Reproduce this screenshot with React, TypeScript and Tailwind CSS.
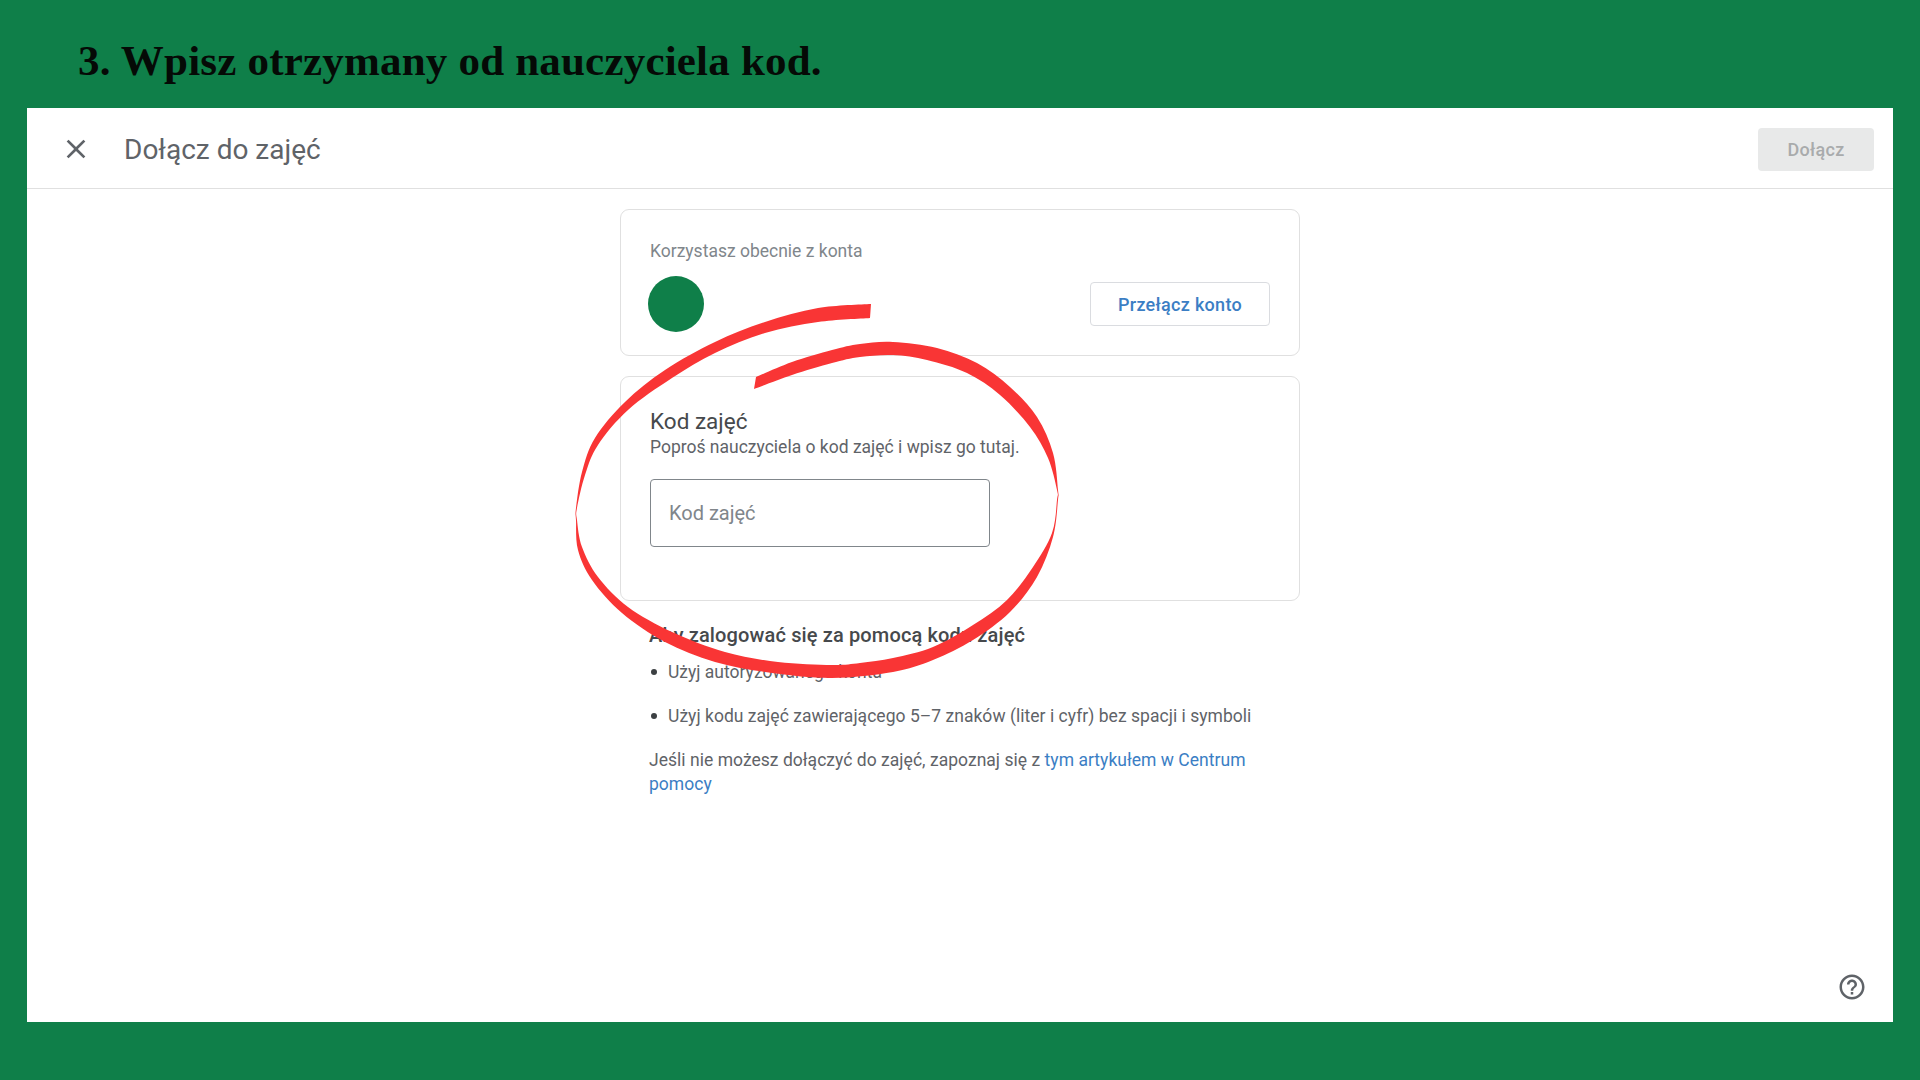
const outer: [number, number][] = [
  [871, 304], [818, 308], [765, 322], [715, 342], [665, 370], [625, 402], [595, 438], [582, 472], [576, 508], [576, 520], [578, 550],
  [592, 580], [622, 613], [665, 642], [715, 662], [772, 673], [832, 678], [893, 672], [933, 660], [973, 640], [1010, 612], [1037, 577],
  [1053, 537], [1058, 500], [1058, 490], [1053, 453], [1037, 417], [1010, 387], [977, 363], [937, 348], [893, 342], [860, 344], [832, 350],
  [792, 362], [756, 377],
];
const inner: [number, number][] = [
  [754, 389], [792, 375], [832, 363], [860, 357], [893, 355], [927, 360], [967, 373], [1000, 395], [1030, 427], [1048, 458], [1057, 490],
  [1057, 500], [1052, 533], [1033, 567], [1007, 600], [973, 625], [933, 647], [893, 658], [860, 663], [832, 665], [778, 662], [725, 652],
  [672, 632], [628, 607], [598, 577], [582, 547], [577, 520], [577, 508], [585, 475], [598, 445], [628, 410], [672, 378], [715, 353],
  [765, 333], [818, 322], [870, 318],
];

function smooth(points: [number, number][], first: boolean) {
  let d = first ? `M${points[0][0]} ${points[0][1]}` : `L${points[0][0]} ${points[0][1]}`;
  for (let i = 0; i < points.length - 1; i++) {
    const p0 = points[Math.max(i - 1, 0)];
    const p1 = points[i];
    const p2 = points[i + 1];
    const p3 = points[Math.min(i + 2, points.length - 1)];
    const c1x = p1[0] + (p2[0] - p0[0]) / 6;
    const c1y = p1[1] + (p2[1] - p0[1]) / 6;
    const c2x = p2[0] - (p3[0] - p1[0]) / 6;
    const c2y = p2[1] - (p3[1] - p1[1]) / 6;
    d += ` C${c1x} ${c1y} ${c2x} ${c2y} ${p2[0]} ${p2[1]}`;
  }
  return d;
}

const stroke = smooth(outer, true) + " " + smooth(inner, false) + " Z";

export default function App() {
  return (
    <div className="relative flex h-[1080px] w-[1920px] flex-col overflow-hidden bg-[#0f7f49] font-['Roboto',sans-serif]">
      <div className="flex h-[108px] shrink-0 items-start pl-[78px] pt-[33px]">
        <h1 className="font-['Liberation_Serif',serif] text-[43px] font-bold leading-[56px] tracking-[0.2px] text-[#050a06]">
          3. Wpisz otrzymany od nauczyciela kod.
        </h1>
      </div>

      <main className="mx-[27px] flex h-[914px] shrink-0 flex-col bg-white">
        <header className="flex h-[81px] shrink-0 items-center border-b border-[#e0e0e0] pr-[19px]">
          <svg className="ml-[33px] mt-[1px] h-[32px] w-[32px] text-[#5f6368]" viewBox="0 0 24 24" fill="currentColor">
            <path d="M19 6.41L17.59 5 12 10.59 6.41 5 5 6.41 10.59 12 5 17.59 6.41 19 12 13.41 17.59 19 19 17.59 13.41 12z" />
          </svg>
          <div className="ml-[32px] mt-[3px] text-[28px] text-[#5f6368]">Dołącz do zajęć</div>
          <button className="ml-auto mt-[2px] h-[43px] w-[116px] rounded-[4px] bg-[#e8e9e9] text-[18px] font-medium tracking-[0.3px] text-[#a9abac]">
            Dołącz
          </button>
        </header>

        <div className="flex flex-1 flex-col items-center pt-[20px]">
          <div className="w-[680px]">
            <section className="h-[147px] rounded-[9px] border border-[#e0e0e0] px-[29px] pt-[30px]">
              <div className="text-[17.5px] leading-[22px] text-[#80868b]">Korzystasz obecnie z konta</div>
              <div className="mt-[14px] flex items-center justify-between">
                <div className="-ml-[2px] h-[56px] w-[56px] rounded-full bg-[#0f7f49]" />
                <button className="h-[44px] w-[180px] rounded-[4px] border border-[#dadce0] text-[18px] font-medium tracking-[0.3px] text-[#3b7ec4]">
                  Przełącz konto
                </button>
              </div>
            </section>

            <section className="mt-[20px] h-[225px] rounded-[9px] border border-[#e0e0e0] px-[29px] pt-[29px]">
              <div className="text-[22.5px] leading-[30px] text-[#46494c]">Kod zajęć</div>
              <div className="text-[17.5px] leading-[22px] text-[#5f6368]">Poproś nauczyciela o kod zajęć i wpisz go tutaj.</div>
              <div className="mt-[21px] flex h-[68px] w-[340px] items-center rounded-[4px] border border-[#80868b] pl-[18px] text-[20px] text-[#80868b]">
                Kod zajęć
              </div>
            </section>

            <div className="pl-[29px] pr-[40px] pt-[21px]">
              <h2 className="text-[20px] font-medium leading-[26px] tracking-[0.14px] text-[#46494c]">Aby zalogować się za pomocą kodu zajęć</h2>
              <ul className="mt-[12px] text-[17.5px] leading-[24px] text-[#5f6368]">
                <li className="flex items-center">
                  <span className="ml-[2px] mr-[11px] h-[6px] w-[6px] rounded-full bg-[#3c4043]" />
                  Użyj autoryzowanego konta
                </li>
                <li className="mt-[20px] flex items-center tracking-[0.03px]">
                  <span className="ml-[2px] mr-[11px] h-[6px] w-[6px] rounded-full bg-[#3c4043]" />
                  Użyj kodu zajęć zawierającego 5–7 znaków (liter i cyfr) bez spacji i symboli
                </li>
              </ul>
              <p className="mt-[20px] text-[17.5px] leading-[24px] tracking-[0.03px] text-[#5f6368]">
                Jeśli nie możesz dołączyć do zajęć, zapoznaj się z <span className="text-[#3b7ec4]">tym artykułem w Centrum pomocy</span>
              </p>
            </div>
          </div>
        </div>

        <div className="flex h-[67px] shrink-0 justify-end pr-[26px] pt-[17px]">
          <svg className="h-[30px] w-[30px] text-[#5f6368]" viewBox="0 0 24 24" fill="currentColor">
            <path d="M11 18h2v-2h-2v2zm1-16C6.48 2 2 6.48 2 12s4.48 10 10 10 10-4.48 10-10S17.52 2 12 2zm0 18c-4.41 0-8-3.59-8-8s3.59-8 8-8 8 3.59 8 8-3.59 8-8 8zm0-14c-2.21 0-4 1.79-4 4h2c0-1.1.9-2 2-2s2 .9 2 2c0 2-3 1.75-3 5h2c0-2.25 3-2.5 3-5 0-2.21-1.79-4-4-4z" />
          </svg>
        </div>
      </main>

      <svg className="pointer-events-none absolute left-0 top-0 h-[1080px] w-[1920px]" viewBox="0 0 1920 1080">
        <path d={stroke} fill="#f93535" fillRule="nonzero" />
      </svg>
    </div>
  );
}
